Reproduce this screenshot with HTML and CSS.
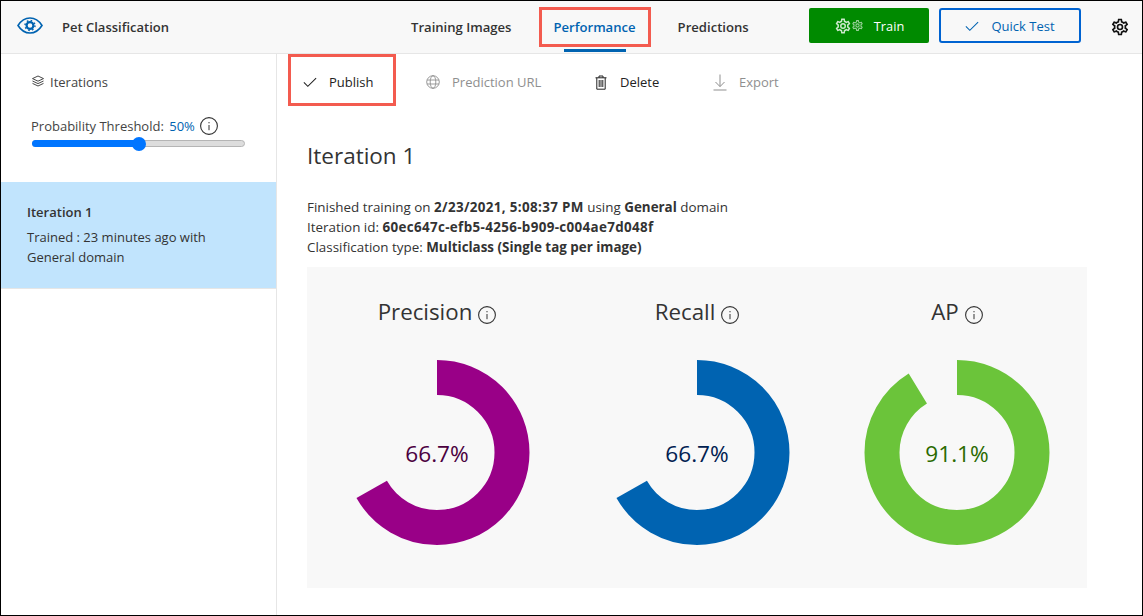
FILE: index.html
```html
<!DOCTYPE html>
<html lang="en">
<head>
    <meta charset="UTF-8">
    <title>Pet Classification</title>
    <link rel="stylesheet" href="styles.css">
</head>
<body>
    <svg class="sprites" width="0" height="0">
        <symbol id="gear" viewBox="0 0 24 24">
            <path fill="currentColor" d="M12,8A4,4 0 0,1 16,12A4,4 0 0,1 12,16A4,4 0 0,1 8,12A4,4 0 0,1 12,8M12,10A2,2 0 0,0 10,12A2,2 0 0,0 12,14A2,2 0 0,0 14,12A2,2 0 0,0 12,10M10,22C9.75,22 9.54,21.82 9.5,21.58L9.13,18.93C8.5,18.68 7.96,18.34 7.44,17.94L4.95,18.95C4.73,19.03 4.46,18.95 4.34,18.73L2.34,15.27C2.21,15.05 2.27,14.78 2.46,14.63L4.57,12.97L4.5,12L4.57,11L2.46,9.37C2.27,9.22 2.21,8.95 2.34,8.73L4.34,5.27C4.46,5.05 4.73,4.96 4.95,5.05L7.44,6.05C7.96,5.66 8.5,5.32 9.13,5.07L9.5,2.42C9.54,2.18 9.75,2 10,2H14C14.25,2 14.46,2.18 14.5,2.42L14.87,5.07C15.5,5.32 16.04,5.66 16.56,6.05L19.05,5.05C19.27,4.96 19.54,5.05 19.66,5.27L21.66,8.73C21.79,8.95 21.73,9.22 21.54,9.37L19.43,11L19.5,12L19.43,13L21.54,14.63C21.73,14.78 21.79,15.05 21.66,15.27L19.66,18.73C19.54,18.95 19.27,19.04 19.05,18.95L16.56,17.95C16.04,18.34 15.5,18.68 14.87,18.93L14.5,21.58C14.46,21.82 14.25,22 14,22H10M11.25,4L10.88,6.61C9.68,6.86 8.62,7.5 7.85,8.39L5.44,7.35L4.69,8.65L6.8,10.2C6.4,11.37 6.4,12.64 6.8,13.8L4.68,15.36L5.43,16.66L7.86,15.62C8.63,16.5 9.68,17.14 10.87,17.38L11.24,20H12.76L13.13,17.39C14.32,17.14 15.37,16.5 16.14,15.62L18.57,16.66L19.32,15.36L17.2,13.81C17.6,12.64 17.6,11.37 17.2,10.2L19.31,8.65L18.56,7.35L16.15,8.39C15.38,7.5 14.32,6.86 13.12,6.62L12.75,4H11.25Z"/>
        </symbol>
        <symbol id="info" viewBox="0 0 18 18">
            <circle cx="9" cy="9" r="8.4" fill="none" stroke="currentColor" stroke-width="1.1"/>
            <path d="M9 8v5.2M9 5v1.3" fill="none" stroke="currentColor" stroke-width="1"/>
        </symbol>
        <symbol id="check" viewBox="0 0 16 16">
            <path d="M1 8.500l4.500 4.500L15 3.500" fill="none" stroke="currentColor" stroke-width="1.200"/>
        </symbol>
    </svg>

    <div class="frame">
        <!-- top bar -->
        <header class="topbar">
            <div class="brand">
                <svg class="eye" viewBox="0 0 26 17" width="26" height="17">
                    <path d="M1 8.500C4 3.700 8 1 13 1s9 2.700 12 7.500C22 13.300 18 16 13 16S4 13.300 1 8.500z" fill="none" stroke="#0063b1" stroke-width="1.600"/>
                    <circle cx="13" cy="8.500" r="3.400" fill="none" stroke="#0063b1" stroke-width="2.200"/>
                    <circle cx="13" cy="8.500" r="5" fill="none" stroke="#0063b1" stroke-width="1.400" stroke-dasharray="1.600 2.330"/>
                </svg>
                <span class="brand-name">Pet Classification</span>
            </div>
            <nav class="tabs">
                <a class="tab">Training Images</a>
                <a class="tab tab-active">Performance<span class="callout"></span></a>
                <a class="tab">Predictions</a>
            </nav>
            <div class="actions">
                <button class="btn btn-train">
                    <svg class="gear-big" width="18" height="18"><use href="#gear"/></svg>
                    <svg class="gear-small" width="13" height="13"><use href="#gear"/></svg>
                    <span class="btn-label">Train</span>
                </button>
                <button class="btn btn-test">
                    <svg width="14" height="14"><use href="#check"/></svg>
                    <span class="btn-label">Quick Test</span>
                </button>
                <svg class="settings" width="20" height="20"><use href="#gear"/></svg>
            </div>
        </header>

        <div class="body-row">
            <!-- left column -->
            <aside class="sidebar">
                <div class="side-title">
                    <svg viewBox="0 0 14 14" width="14" height="14" fill="none" stroke="#333" stroke-width="0.9">
                        <path d="M7 1l5.500 2.600L7 6.200 1.500 3.600z"/>
                        <path d="M1.500 6L7 8.600 12.500 6"/>
                        <path d="M1.500 8.400L7 11l5.500-2.600"/>
                    </svg>
                    Iterations
                </div>
                <div class="threshold">
                    <span>Probability Threshold: <span class="threshold-value">50%</span></span>
                    <svg class="threshold-info" width="18" height="18"><use href="#info"/></svg>
                </div>
                <div class="slider">
                    <div class="slider-fill"></div>
                    <div class="slider-thumb"></div>
                </div>
                <div class="iter-item">
                    <div class="iter-name">Iteration 1</div>
                    <div class="iter-desc">Trained : 23 minutes ago with<br>General domain</div>
                </div>
            </aside>

            <main class="content">
                <div class="toolbar">
                    <a class="tool tool-publish">
                        <svg width="14" height="14"><use href="#check"/></svg>
                        Publish<span class="callout"></span>
                    </a>
                    <a class="tool tool-url disabled">
                        <svg viewBox="0 0 14 14" width="14" height="14" fill="none" stroke="currentColor" stroke-width="0.9">
                            <circle cx="7" cy="7" r="6.300"/>
                            <ellipse cx="7" cy="7" rx="2.800" ry="6.300"/>
                            <path d="M1 5h12M1 9h12"/>
                        </svg>
                        Prediction URL
                    </a>
                    <a class="tool tool-delete">
                        <svg viewBox="0 0 12 15" width="12" height="15" fill="none" stroke="#222" stroke-width="1">
                            <path d="M0.500 2.800h11M4 2.800V1h4v1.800"/>
                            <path d="M1.800 2.800v11.400h8.400V2.800"/>
                            <path d="M4.200 5v7M6 5v7M7.800 5v7"/>
                        </svg>
                        Delete
                    </a>
                    <a class="tool tool-export disabled">
                        <svg viewBox="0 0 14 17" width="14" height="17" fill="none" stroke="currentColor" stroke-width="1">
                            <path d="M7 0.500v12M2.500 8l4.500 4.600L11.500 8M0.500 16h13"/>
                        </svg>
                        Export
                    </a>
                </div>

                <h2 class="iter-title">Iteration 1</h2>
                <p class="meta">
                    Finished training on <b class="num">2/23/2021, 5:08:37 PM</b> using <b>General</b> domain<br>
                    Iteration id: <b class="num">60ec647c-efb5-4256-b909-c004ae7d048f</b><br>
                    Classification type: <b>Multiclass (Single tag per image)</b>
                </p>

                <section class="metrics">
                    <div class="metric">
                        <div class="metric-name">Precision<svg width="18" height="18"><use href="#info"/></svg></div>
                        <div class="donut">
                            <svg width="186" height="185" viewBox="0 0 186 185">
                                <circle class="ring" cx="93" cy="92.500" r="75" stroke="#990087" stroke-dasharray="314.300 471.240"/>
                            </svg>
                            <span class="donut-value value-precision">66.7%</span>
                        </div>
                    </div>
                    <div class="metric">
                        <div class="metric-name">Recall<svg width="18" height="18"><use href="#info"/></svg></div>
                        <div class="donut">
                            <svg width="186" height="185" viewBox="0 0 186 185">
                                <circle class="ring" cx="93" cy="92.500" r="75" stroke="#0063b1" stroke-dasharray="314.300 471.240"/>
                            </svg>
                            <span class="donut-value value-recall">66.7%</span>
                        </div>
                    </div>
                    <div class="metric">
                        <div class="metric-name">AP<svg width="18" height="18"><use href="#info"/></svg></div>
                        <div class="donut">
                            <svg width="186" height="185" viewBox="0 0 186 185">
                                <circle class="ring" cx="93" cy="92.500" r="75" stroke="#6bc43a" stroke-dasharray="429.300 471.240"/>
                            </svg>
                            <span class="donut-value value-ap">91.1%</span>
                        </div>
                    </div>
                </section>
            </main>
        </div>
    </div>
</body>
</html>
```

FILE: styles.css
```css
* {
    box-sizing: border-box;
}

body {
    margin: 0;
    font-family: "Open Sans", "Noto Sans", sans-serif;
    color: #333;
    background-color: #fff;
}

.sprites {
    position: absolute;
}

.frame {
    width: 1143px;
    height: 616px;
    border: 1px solid #000;
    overflow: hidden;
    display: flex;
    flex-direction: column;
}

/* top bar */
.topbar {
    height: 53px;
    flex: none;
    display: flex;
    align-items: center;
    background-color: #f8f8f8;
    border-bottom: 1px solid #e6e6e6;
}

.brand {
    width: 410px;
    flex: none;
    display: flex;
    align-items: center;
    padding-left: 16px;
}

.eye {
    flex: none;
    margin-bottom: 3px;
}

.brand-name {
    margin-left: 19px;
    font-size: 13px;
    font-weight: 600;
    color: #333;
}

.tabs {
    display: flex;
    gap: 42px;
}

.tab {
    position: relative;
    font-size: 13.1px;
    font-weight: 600;
    line-height: 52px;
    color: #333;
    white-space: nowrap;
}

.tab-active {
    color: #0063b1;
}

.tab-active::after {
    content: "";
    position: absolute;
    left: 10px;
    right: 10px;
    bottom: 1px;
    height: 3px;
    background-color: #0063b1;
}

.callout {
    position: absolute;
    border: 3px solid #f35b4f;
    pointer-events: none;
}

.tab .callout {
    left: -15px;
    right: -15px;
    top: 6px;
    bottom: 6px;
}

.actions {
    margin-left: auto;
    display: flex;
    align-items: center;
}

.btn {
    height: 35px;
    margin-bottom: 3px;
    display: flex;
    align-items: center;
    justify-content: center;
    font-family: inherit;
    font-size: 13px;
    border-radius: 2px;
    padding: 0;
}

.btn-label {
    margin-left: 12px;
}

.btn-train {
    width: 120px;
    background-color: #008a00;
    border: none;
    color: #fff;
}

.btn-train svg {
    opacity: 0.8;
}

.btn-train .gear-small {
    margin-left: -1px;
    opacity: 0.6;
}

.btn-train .btn-label {
    margin-left: 10px;
    font-size: 12.8px;
}

.btn-test {
    width: 142px;
    margin-left: 10px;
    background-color: transparent;
    border: 2px solid #0063d1;
    border-radius: 3px;
    color: #0063b1;
}

.settings {
    margin-left: 29px;
    margin-right: 12px;
    color: #111;
}

/* page below the bar */
.body-row {
    flex: 1;
    display: flex;
    min-height: 0;
}

.sidebar {
    width: 276px;
    flex: none;
    border-right: 1px solid #e6e6e6;
    font-size: 13px;
}

.side-title {
    height: 52px;
    display: flex;
    align-items: center;
    gap: 5px;
    padding: 4px 0 0 30px;
    color: #444;
}

.threshold {
    display: flex;
    align-items: center;
    padding-left: 30px;
    margin-top: 11px;
    height: 18px;
    color: #444;
    white-space: nowrap;
}

.threshold-value {
    margin-left: 2px;
    color: #0063b1;
}

.threshold-info {
    margin-left: 5px;
    color: #333;
}

.slider {
    position: relative;
    margin: 5px 0 0 31px;
    width: 213px;
    height: 7px;
    background-color: #ddd;
    border: 1px solid #b5b5b5;
    border-radius: 4px;
}

.slider-fill {
    width: 107px;
    height: 7px;
    margin: -1px 0 0 -1px;
    background-color: #0075ff;
    border-radius: 4px;
}

.slider-thumb {
    position: absolute;
    left: 99px;
    top: -4px;
    width: 14px;
    height: 14px;
    border-radius: 50%;
    background-color: #0075ff;
}

.iter-item {
    margin-top: 35px;
    height: 107px;
    padding: 20px 0 0 26px;
    background-color: #c1e4fd;
    border-bottom: 1px solid #e6e6e6;
    color: #333;
}

.iter-name {
    font-weight: 600;
    line-height: 20px;
}

.iter-desc {
    margin-top: 5px;
    line-height: 20px;
}

/* main area */
.content {
    flex: 1;
    min-width: 0;
    padding-left: 30px;
}

.toolbar {
    height: 52px;
    margin-left: -30px;
    position: relative;
    font-size: 13px;
}

.tool {
    position: absolute;
    top: 0;
    height: 52px;
    padding-top: 4px;
    display: flex;
    align-items: center;
    white-space: nowrap;
    color: #222;
}

.tool-publish {
    left: 26px;
    gap: 12px;
}

.tool-url {
    left: 149px;
    gap: 12px;
}

.tool-delete {
    left: 318px;
    gap: 13px;
}

.tool-export {
    left: 436px;
    gap: 12px;
}

.disabled {
    color: #8f8f8f;
}

.tool .callout {
    left: -15px;
    right: -11px;
    top: 0;
    bottom: 0;
}

.iter-title {
    margin: 33px 0 0;
    font-size: 22.5px;
    font-weight: 400;
    line-height: 33px;
    color: #333;
}

.meta {
    margin: 25px 0 0;
    font-size: 13.4px;
    line-height: 20px;
    color: #333;
}

.meta b {
    font-weight: 700;
}

.meta .num {
    letter-spacing: 0.35px;
}

.metrics {
    margin-top: 10px;
    width: 780px;
    height: 321px;
    display: grid;
    grid-template-columns: repeat(3, 1fr);
    background-color: #f8f8f8;
}

.metric {
    display: flex;
    flex-direction: column;
    align-items: center;
}

.metric-name {
    margin-top: 27px;
    height: 34px;
    display: flex;
    align-items: center;
    gap: 6px;
    font-size: 22.3px;
    color: #333;
}

.metric-name svg {
    margin-top: 7px;
}

.donut {
    margin-top: 32px;
    width: 186px;
    height: 185px;
    display: grid;
    place-items: center;
}

.donut svg,
.donut-value {
    grid-area: 1 / 1;
}

.ring {
    fill: none;
    stroke-width: 35;
    transform: rotate(-90deg);
    transform-origin: 93px 92.5px;
}

.donut-value {
    font-size: 22.6px;
    margin-top: 2px;
}

.value-precision {
    color: #4b003f;
}

.value-recall {
    color: #002050;
}

.value-ap {
    color: #2a6a00;
}
```
